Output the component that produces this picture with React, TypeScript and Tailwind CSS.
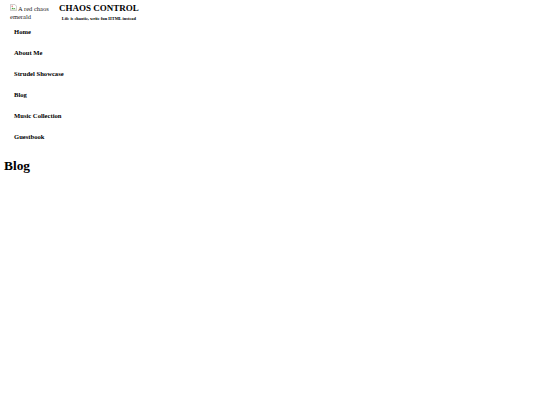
import React from 'react';

const links = ['Home', 'About Me', 'Strudel Showcase', 'Blog', 'Music Collection', 'Guestbook'];

const BrokenImage: React.FC = () => (
  <svg width="7" height="7" viewBox="0 0 16 16" className="inline-block align-baseline mr-[1px]">
    <path d="M1 1h10l4 4v10H1z" fill="#fff" stroke="#888" strokeWidth="1" />
    <path d="M3 12l3-4 2 3 2-2 3 3z" fill="#4a9c3a" />
    <circle cx="5" cy="5" r="1.5" fill="#d44" />
  </svg>
);

export default function App() {
  return (
    <div className="min-h-[405px] bg-white text-black px-[4px]" style={{ fontFamily: '"Liberation Serif", serif' }}>
      <header className="flex items-start h-[21px] pt-[4px]">
        <div className="w-[45px] ml-[6px] text-[6.5px] leading-[7.5px] text-[#222]">
          <BrokenImage />A red chaos emerald
        </div>
        <div className="ml-[4px] flex flex-col items-center">
          <h1 className="text-[9px] leading-[9px] font-bold">CHAOS CONTROL</h1>
          <p className="text-[4.4px] leading-[5px] font-bold mt-[3px]">Life is chaotic, write fun HTML instead</p>
        </div>
      </header>
      <nav className="flex flex-col pl-[10px]">
        {links.map((l) => (
          <a key={l} className="text-[6.6px] leading-[9px] font-bold py-[6px]">
            {l}
          </a>
        ))}
      </nav>
      <h1 className="text-[13.4px] leading-[18px] font-bold mt-[10px]">Blog</h1>
    </div>
  );
}
